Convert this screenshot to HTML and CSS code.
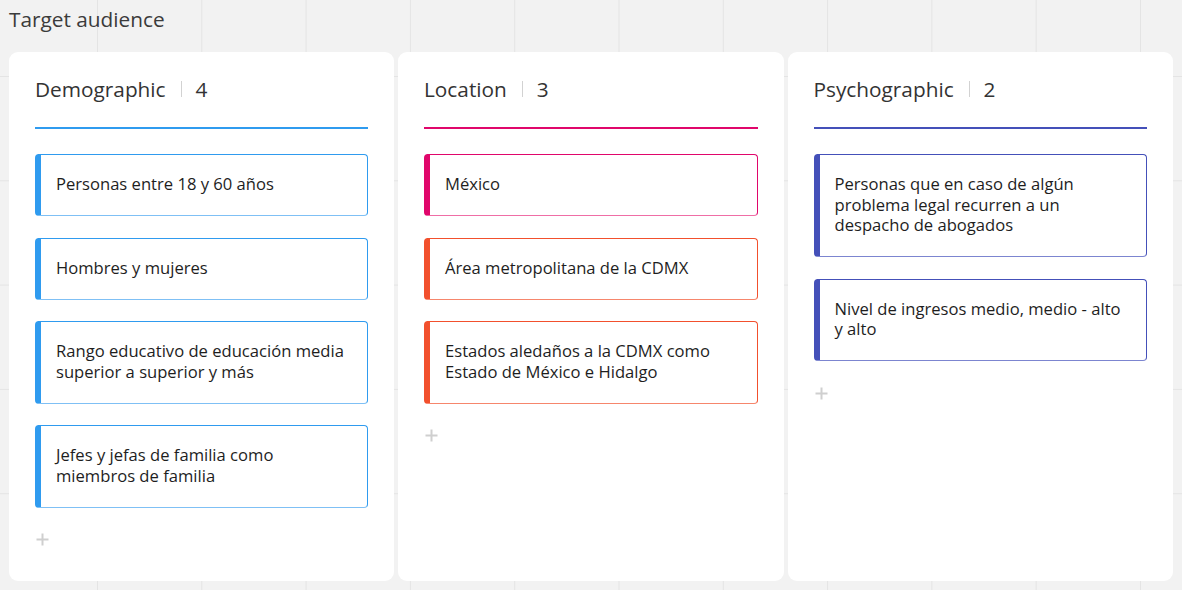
FILE: index.html
```html
<!DOCTYPE html>
<html lang="es">
<head>
<meta charset="utf-8">
<title>Target audience</title>
<link rel="stylesheet" href="styles.css">
</head>
<body>
<h1 class="page-title">Target audience</h1>
<div class="board">
  <section class="column col-blue">
    <header class="col-head"><span class="col-name">Demographic</span><span class="col-sep"></span><span class="col-count">4</span></header>
    <div class="cards">
      <div class="card">Personas entre 18 y 60 años</div>
      <div class="card">Hombres y mujeres</div>
      <div class="card">Rango educativo de educación media superior a superior y más</div>
      <div class="card">Jefes y jefas de familia como miembros de familia</div>
    </div>
    <div class="add"><svg width="13" height="13" viewBox="0 0 13 13"><path d="M6.5 0.5v12M0.5 6.5h12" stroke="#cfcfcf" stroke-width="2" fill="none"/></svg></div>
  </section>
  <section class="column col-magenta">
    <header class="col-head"><span class="col-name">Location</span><span class="col-sep"></span><span class="col-count">3</span></header>
    <div class="cards">
      <div class="card">México</div>
      <div class="card card-orange">Área metropolitana de la CDMX</div>
      <div class="card card-orange">Estados aledaños a la CDMX como Estado de México e Hidalgo</div>
    </div>
    <div class="add"><svg width="13" height="13" viewBox="0 0 13 13"><path d="M6.5 0.5v12M0.5 6.5h12" stroke="#cfcfcf" stroke-width="2" fill="none"/></svg></div>
  </section>
  <section class="column col-indigo">
    <header class="col-head"><span class="col-name">Psychographic</span><span class="col-sep"></span><span class="col-count">2</span></header>
    <div class="cards">
      <div class="card">Personas que en caso de algún problema legal recurren a un despacho de abogados</div>
      <div class="card">Nivel de ingresos medio, medio - alto y alto</div>
    </div>
    <div class="add"><svg width="13" height="13" viewBox="0 0 13 13"><path d="M6.5 0.5v12M0.5 6.5h12" stroke="#cfcfcf" stroke-width="2" fill="none"/></svg></div>
  </section>
</div>
</body>
</html>
```
FILE: styles.css
```css
html, body {
  margin: 0;
  padding: 0;
}
body {
  width: 1182px;
  height: 590px;
  overflow: hidden;
  font-family: "Open Sans", "Noto Sans", sans-serif;
  background-color: #f2f2f2;
  background-image:
    linear-gradient(to right, #e4e4e4 1px, transparent 1px),
    linear-gradient(to bottom, #e4e4e4 1px, transparent 1px);
  background-size: 104.3px 104.3px;
  background-position: 97px 76px;
}
.page-title {
  margin: 0;
  padding: 5px 0 0 9px;
  height: 46px;
  box-sizing: border-box;
  font-size: 20.8px;
  font-weight: 400;
  line-height: 28px;
  color: #3b3b3b;
}
.board {
  display: grid;
  grid-template-columns: 385px 385.5px 385px;
  column-gap: 4px;
  padding-left: 9px;
}
.column {
  background: #fff;
  border-radius: 9px;
  height: 529px;
  margin-top: 6px;
  padding: 23px 26px 0 26px;
  box-sizing: border-box;
}
.col-head {
  display: flex;
  align-items: center;
  height: 28px;
  padding-bottom: 24px;
  border-bottom: 2px solid #2f9bef;
  font-size: 20.8px;
  color: #333;
}
.col-sep {
  width: 1px;
  height: 16px;
  background: #d2d2d2;
  margin: 0 14px 0 15px;
}
.col-magenta .col-head { border-bottom-color: #e0066b; }
.col-indigo .col-head { border-bottom-color: #4450b9; }
.cards {
  display: flex;
  flex-direction: column;
  gap: 21.5px;
  margin-top: 25px;
}
.card {
  border: 1px solid #2f9bef;
  border-left: 6px solid #2f9bef;
  border-radius: 4px;
  padding: 19px 16px 20.5px 15px;
  font-size: 16.6px;
  line-height: 20.5px;
  color: #1e1e1e;
}
.col-blue .card { border-bottom-color: #7fc0f5; }
.col-magenta .card { border-color: #e0066b; border-bottom-color: #ef6ea6; }
.col-magenta .card-orange { border-color: #f2502d; border-bottom-color: #f6866c; }
.col-indigo .card { border-color: #4450b9; border-bottom-color: #7c85d0; }
.add {
  margin-top: 25.5px;
  padding-left: 1px;
  height: 13px;
  line-height: 0;
}
```
